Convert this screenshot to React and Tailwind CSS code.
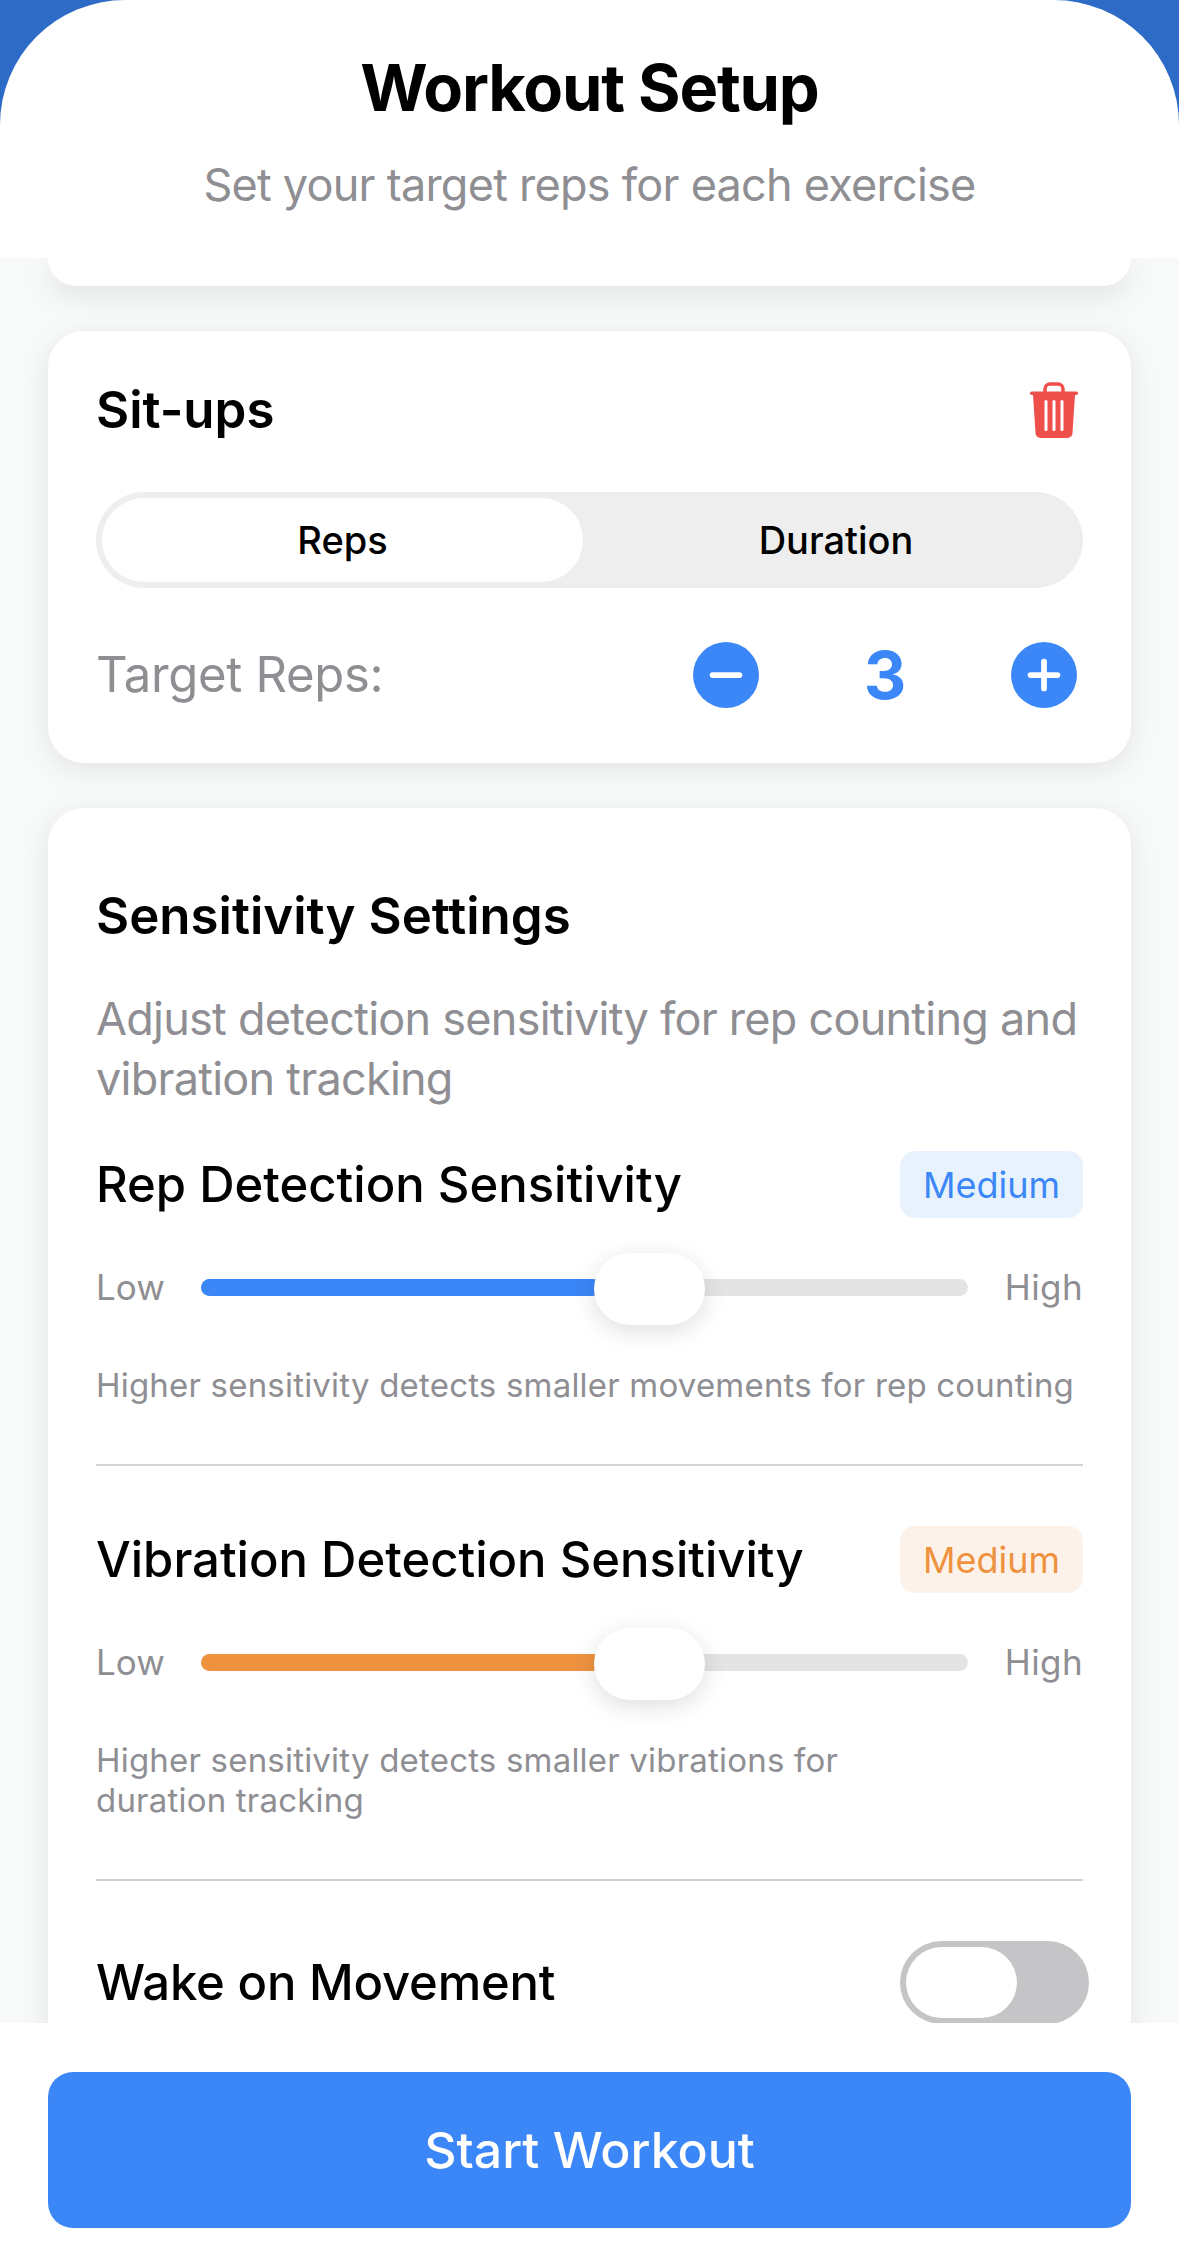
import { Minus, Plus } from "lucide-react";

function TrashIcon() {
  return (
    <svg width="50" height="58" viewBox="0 0 50 58" className="block">
      <path d="M16 12V8a5 5 0 0 1 5-5h8a5 5 0 0 1 5 5v4" fill="none" stroke="#ef4f4b" strokeWidth="3.5" />
      <rect x="1" y="10.5" width="48" height="3.5" rx="1.75" fill="#ef4f4b" />
      <path d="M4 14h42l-2.5 38a5 5 0 0 1-5 5H11.5a5 5 0 0 1-5-5z" fill="#ef4f4b" />
      <rect x="15.5" y="19" width="3" height="31" rx="1.5" fill="#fff" />
      <rect x="23.5" y="19" width="3" height="31" rx="1.5" fill="#fff" />
      <rect x="31.5" y="19" width="3" height="31" rx="1.5" fill="#fff" />
    </svg>
  );
}

function SensitivityBlock({ title, hint, badgeClass, fillClass, first }) {
  return (
    <div className={first ? "mt-[42px] border-b-2 border-[#d2d2d4] pb-[59px]" : "mt-[60px] border-b-2 border-[#d2d2d4] pb-[59px]"}>
      <div className="flex h-[67px] items-center justify-between">
        <span className="text-[49px] leading-[60px] font-medium text-black">{title}</span>
        <span className={`flex h-[67px] w-[183px] items-center justify-center rounded-[15px] text-[36px] ${badgeClass}`}>
          Medium
        </span>
      </div>
      <div className="mt-[35px] flex h-[72px] items-center">
        <span className="mb-[3px] w-[105px] text-[35px] text-[#8e8e93]">Low</span>
        <div className="relative mb-[3px] h-[17px] flex-1 rounded-full bg-[#e4e4e4]">
          <div className={`h-full w-[400px] rounded-full ${fillClass}`}></div>
          <div className="absolute top-[-26px] left-[393px] h-[72px] w-[111px] rounded-[36px] bg-white shadow-[0_6px_24px_rgba(0,0,0,0.13)]"></div>
        </div>
        <span className="mb-[3px] w-[115px] text-right text-[35px] tracking-[0.4px] text-[#8e8e93]">High</span>
      </div>
      <p className="mt-[40px] text-[33px] leading-[40px] tracking-[0.2px] text-[#8e8e93]">{hint}</p>
    </div>
  );
}

export default function App() {
  return (
    <div className="flex h-[2252px] flex-col overflow-hidden bg-[#2e6bc6] font-[Inter,sans-serif]">
      <header className="relative z-10 h-[258px] shrink-0 rounded-t-[125px] bg-white text-center">
        <h1 className="pt-[56px] text-[65px] leading-[64px] font-bold tracking-[-1.2px] text-black">Workout Setup</h1>
        <p className="mt-[40px] text-[45px] leading-[50px] tracking-[-0.75px] text-[#8e8e93]">
          Set your target reps for each exercise
        </p>
      </header>

      <main className="flex-1 overflow-hidden bg-[#f8f9f9] px-[48px]">
        <div className="h-[28px] rounded-b-[36px] bg-white shadow-[0_8px_30px_rgba(0,0,0,0.1)]"></div>

        <section className="mt-[45px] h-[432px] rounded-[36px] bg-white px-[48px] pt-[49px] shadow-[0_6px_28px_rgba(0,0,0,0.09)]">
          <div className="flex h-[60px] items-center justify-between">
            <h2 className="text-[51px] font-semibold text-black">Sit-ups</h2>
            <div className="mr-[4px]">
              <TrashIcon />
            </div>
          </div>
          <div className="mt-[52px] flex h-[96px] rounded-[48px] bg-[#eeeeee] p-[6px]">
            <div className="flex w-[481px] items-center justify-center rounded-[42px] bg-white text-[38px] font-medium text-black">
              Reps
            </div>
            <div className="flex flex-1 items-center justify-center pl-[12px] text-[38px] font-medium text-black">
              Duration
            </div>
          </div>
          <div className="mt-[54px] flex h-[66px] items-center">
            <span className="flex-1 text-[49px] tracking-[-0.3px] text-[#8e8e93]">Target Reps:</span>
            <button className="flex h-[66px] w-[66px] items-center justify-center rounded-full bg-[#3b87f7] text-white">
              <Minus size={46} strokeWidth={3} />
            </button>
            <span className="w-[252px] text-center text-[66px] leading-[66px] font-bold text-[#3b87f7]">3</span>
            <button className="mr-[6px] flex h-[66px] w-[66px] items-center justify-center rounded-full bg-[#3b87f7] text-white">
              <Plus size={46} strokeWidth={3} />
            </button>
          </div>
        </section>

        <section className="mt-[45px] rounded-[36px] bg-white px-[48px] pt-[78px] pb-[60px] shadow-[0_6px_28px_rgba(0,0,0,0.09)]">
          <h2 className="text-[51px] leading-[60px] font-semibold text-black">Sensitivity Settings</h2>
          <p className="mt-[43px] text-[45px] leading-[60px] tracking-[-0.75px] text-[#8e8e93]">
            Adjust detection sensitivity for rep counting and vibration tracking
          </p>
          <SensitivityBlock
            first
            title="Rep Detection Sensitivity"
            hint="Higher sensitivity detects smaller movements for rep counting"
            badgeClass="bg-[#e8f2fd] text-[#3b87f7]"
            fillClass="bg-[#3b87f7]"
          />
          <SensitivityBlock
            title="Vibration Detection Sensitivity"
            hint={
              <>
                Higher sensitivity detects smaller vibrations for
                <br />
                duration tracking
              </>
            }
            badgeClass="bg-[#fdf2e9] text-[#ee9240]"
            fillClass="bg-[#ee9240]"
          />
          <div className="mt-[60px] flex h-[83px] items-center justify-between">
            <span className="text-[49px] font-medium tracking-[-0.2px] text-black">Wake on Movement</span>
            <div className="-mr-[6px] h-[83px] w-[189px] rounded-[42px] bg-[#c5c5c7] p-[6px]">
              <div className="h-[71px] w-[111px] rounded-[36px] bg-white"></div>
            </div>
          </div>
        </section>
      </main>

      <footer className="relative z-10 h-[229px] shrink-0 bg-white px-[48px] pt-[49px]">
        <button className="flex h-[156px] w-full items-center justify-center rounded-[25px] bg-[#3b87f7] text-[50px] font-medium text-white">
          Start Workout
        </button>
      </footer>
    </div>
  );
}
